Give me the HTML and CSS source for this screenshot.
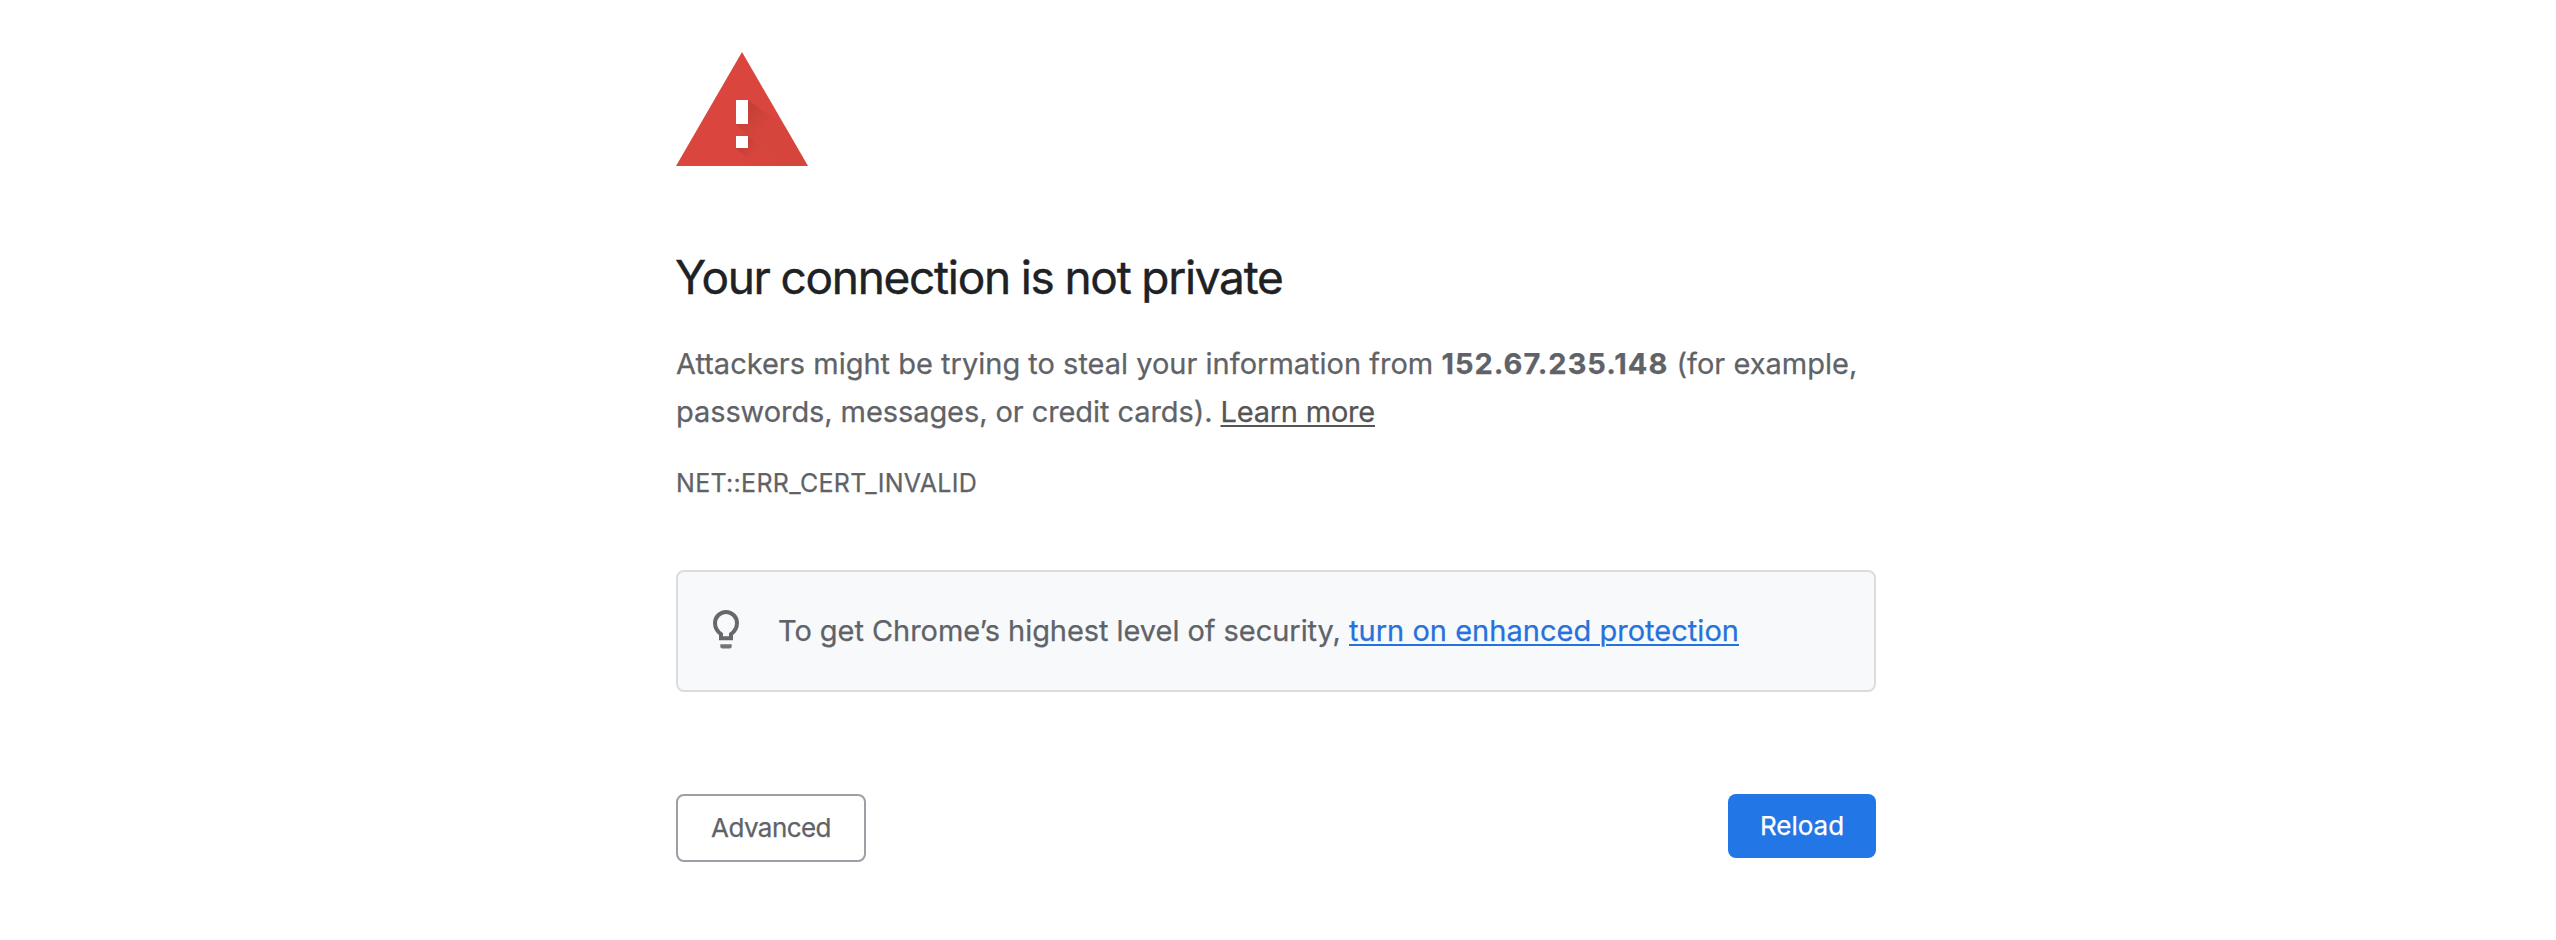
FILE: index.html
```
<!DOCTYPE html>
<html lang="en">
<head>
<meta charset="utf-8">
<title>Privacy error</title>
<link rel="stylesheet" href="styles.css">
</head>
<body>
<main class="page">
  <svg class="warning-icon" viewBox="0 0 132 114" aria-hidden="true">
    <defs>
      <linearGradient id="shade-top" gradientUnits="userSpaceOnUse" x1="66" y1="54" x2="92" y2="80">
        <stop offset="0" stop-color="#a83830" stop-opacity=".55"/>
        <stop offset="1" stop-color="#c8413a" stop-opacity=".2"/>
      </linearGradient>
      <linearGradient id="shade-dot" gradientUnits="userSpaceOnUse" x1="66" y1="90" x2="80" y2="104">
        <stop offset="0" stop-color="#a83830" stop-opacity=".6"/>
        <stop offset="1" stop-color="#c8413a" stop-opacity=".1"/>
      </linearGradient>
    </defs>
    <path d="M66 0 132 114H0z" fill="#da463d"/>
    <path d="M72 48 109 74 132 114H102L60 72z" fill="url(#shade-top)"/>
    <path d="M72 84 102 114H78L60 96z" fill="url(#shade-dot)"/>
    <path d="M60 48h12v24H60zM60 84h12v12H60z" fill="#fff"/>
  </svg>
  <h1 class="title">Your connection is not private</h1>
  <p class="message">Attackers might be trying to steal your information from <strong class="host">152.67.235.148</strong> (for example,<br><span class="second-line">passwords, messages, or credit cards). <a class="learn-more">Learn more</a></span></p>
  <p class="error-code">NET::ERR_CERT_INVALID</p>
  <div class="tip">
    <svg class="bulb" viewBox="0 0 26 39" aria-hidden="true">
      <path d="M8 28.3V24.2C4.400 21.500 2 18 2 13a11 11 0 0 1 22 0c0 5-2.400 8.500-6 11.200v4.100z" fill="none" stroke="#66686b" stroke-width="4"/>
      <path d="M7.300 34.300h11.400v2.200a2 2 0 0 1-2 2H9.300a2 2 0 0 1-2-2z" fill="#737578"/>
    </svg>
    <p class="tip-text">To get Chrome’s highest level of security, <a class="tip-link">turn on enhanced protection</a></p>
  </div>
  <div class="actions">
    <button class="button advanced">Advanced</button>
    <button class="button reload">Reload</button>
  </div>
</main>
</body>
</html>
```
FILE: styles.css
```
body {
  margin: 0;
  background: #fff;
  color: #5f6368;
  font: 29px/48px Inter, "Liberation Sans", sans-serif;
}
.page {
  width: 1200px;
  margin-left: 676px;
  padding-top: 52px;
}
.warning-icon {
  display: block;
  width: 132px;
  height: 114px;
}
.title {
  margin: 82px 0 34px;
  color: #202124;
  font-size: 46px;
  font-weight: 400;
  line-height: 58px;
  letter-spacing: -1.3px;
  word-spacing: -.7px;
  text-indent: -1px;
  -webkit-text-stroke: .4px #202124;
}
.message {
  margin: 0;
  white-space: nowrap;
}
.host {
  font-weight: 700;
  letter-spacing: 1.01px;
}
.second-line {
  letter-spacing: -.085px;
}
.learn-more {
  color: #555;
  letter-spacing: -.217px;
}
.learn-more,
.tip-link {
  text-decoration: underline;
  text-decoration-thickness: 2px;
  text-underline-offset: 3px;
}
.error-code {
  margin: 27px 0 0;
  font-size: 25px;
  line-height: 40px;
  letter-spacing: .3px;
}
.message,
.error-code,
.tip-text,
.button {
  -webkit-text-stroke: .25px currentColor;
}
.tip {
  display: flex;
  align-items: center;
  gap: 39px;
  box-sizing: border-box;
  height: 122px;
  margin-top: 67px;
  padding: 0 35px;
  border: 2px solid #dadce0;
  border-radius: 8px;
  background: #f8f9fb;
}
.bulb {
  width: 26px;
  height: 39px;
  margin-bottom: 4px;
}
.tip-text {
  margin: 0;
  letter-spacing: -.052px;
}
.tip-link {
  color: #2672dc;
  letter-spacing: .027px;
}
.actions {
  display: flex;
  align-items: flex-start;
  justify-content: space-between;
  margin-top: 102px;
}
.button {
  box-sizing: border-box;
  padding: 0;
  border-radius: 8px;
  font: 26px/32px Inter, "Liberation Sans", sans-serif;
}
.advanced {
  width: 190px;
  height: 68px;
  border: 2px solid #9aa0a6;
  background: #fff;
  color: #5f6368;
  letter-spacing: -.55px;
}
.reload {
  width: 148px;
  height: 64px;
  border: 0;
  background: #2376e5;
  color: #fff;
}
```
